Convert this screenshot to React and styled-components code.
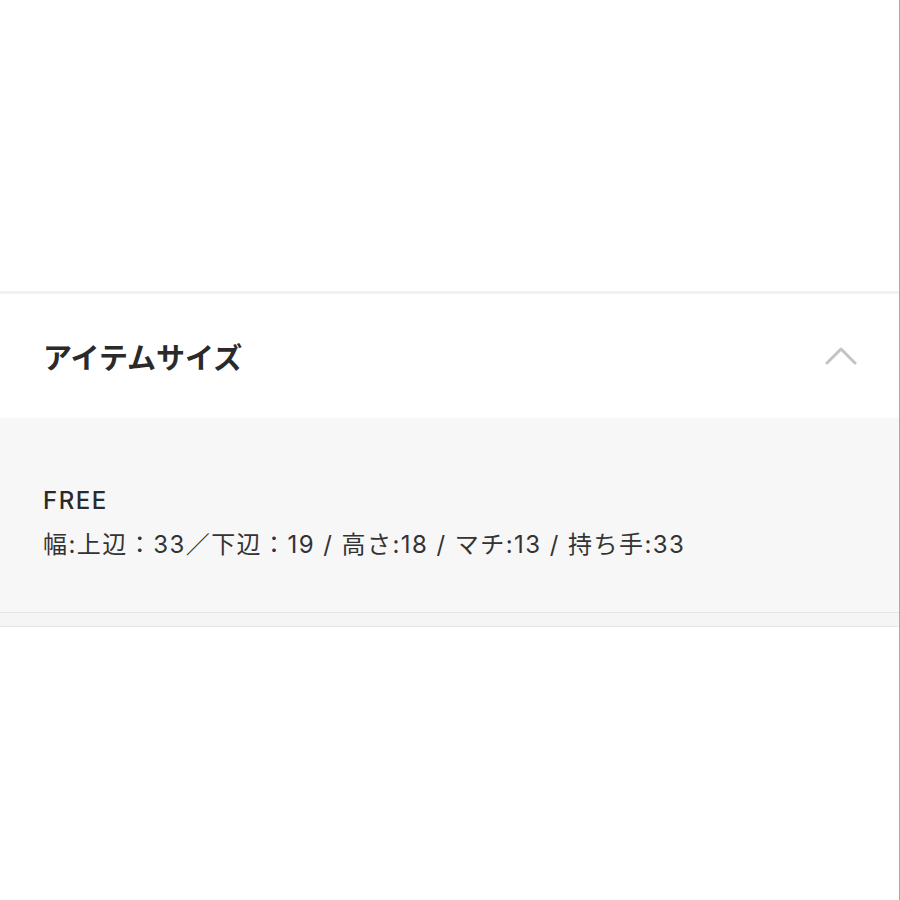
import React from "react";
import styled, { createGlobalStyle } from "styled-components";

const Global = createGlobalStyle`
  html, body { margin: 0; padding: 0; background: #ffffff; }
  body { font-family: Inter, "Noto Sans CJK JP", sans-serif; color: #222; }
`;

const Page = styled.div`
  width: 900px;
  min-height: 900px;
  display: flex;
  flex-direction: column;
  background: #fff;
  border-right: 1px solid #a8a8a8;
  box-sizing: border-box;
`;

const Spacer = styled.div`
  height: ${(p) => p.$h}px;
`;

const Section = styled.section`
  border-top: 3px solid #f1f1f1;
  display: flex;
  flex-direction: column;
`;

const Header = styled.div`
  height: 124px;
  display: flex;
  align-items: center;
  justify-content: space-between;
  padding: 0 42px 0 43px;
`;

const Title = styled.h2`
  margin: 0;
  font-family: "Noto Sans CJK JP", sans-serif;
  font-size: 29px;
  font-weight: 700;
  color: #2a2a2a;
`;

const Body = styled.div`
  background: #f7f7f7;
  padding: 68px 43px 52px;
  display: flex;
  flex-direction: column;
  gap: 14px;
  border-bottom: 1px solid #e6e6e6;
`;

const SizeName = styled.div`
  font-size: 24px;
  font-weight: 500;
  letter-spacing: 1.5px;
  color: #2a2a2a;
  line-height: 30px;
`;

const SizeDetail = styled.div`
  font-size: 24px;
  font-weight: 400;
  letter-spacing: 1.45px;
  color: #333;
  line-height: 30px;
`;

const Band = styled.div`
  height: 13px;
  background: #f5f5f5;
  border-bottom: 1px solid #e6e6e6;
`;

const Chevron = () => (
  <svg width="32" height="22" viewBox="0 0 32 22" aria-hidden="true">
    <path d="M2 18 L16 4 L30 18" fill="none" stroke="#c4c4c4" strokeWidth="3" strokeLinecap="round" strokeLinejoin="round" />
  </svg>
);

export default function App() {
  return (
    <>
      <Global />
      <Page>
        <Spacer $h={291} />
        <Section>
          <Header>
            <Title>アイテムサイズ</Title>
            <Chevron />
          </Header>
          <Body>
            <SizeName>FREE</SizeName>
            <SizeDetail>幅:上辺：33／下辺：19 / 高さ:18 / マチ:13 / 持ち手:33</SizeDetail>
          </Body>
          <Band />
        </Section>
      </Page>
    </>
  );
}
